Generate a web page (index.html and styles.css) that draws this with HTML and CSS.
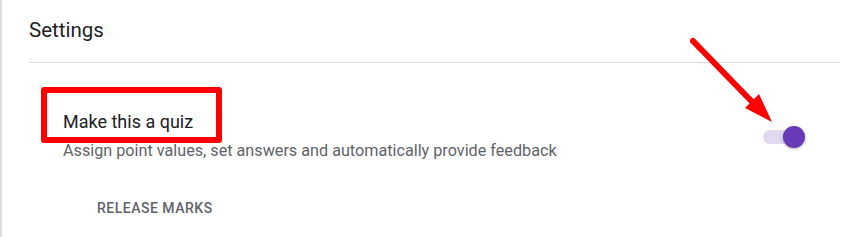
FILE: index.html
```html
<!DOCTYPE html>
<html>
<head>
<meta charset="utf-8">
<link rel="stylesheet" href="styles.css">
</head>
<body>
<div class="card">
  <div class="header">
    <div class="title">Settings</div>
  </div>
  <div class="row">
    <div class="texts">
      <div class="label">Make this a quiz</div>
      <div class="desc">Assign point values, set answers and automatically provide feedback</div>
    </div>
    <div class="toggle">
      <div class="track"></div>
      <div class="thumb"></div>
    </div>
  </div>
  <div class="actions">
    <span class="release">RELEASE MARKS</span>
  </div>
  <div class="highlight"></div>
  <svg class="arrow" width="851" height="237" viewBox="0 0 851 237">
    <line x1="693" y1="41" x2="760" y2="110" stroke="#ff0000" stroke-width="6" stroke-linecap="round"/>
    <polygon points="745,108 759,94 772,122" fill="#ff0000"/>
  </svg>
</div>
</body>
</html>
```
FILE: styles.css
```css
html, body {
  margin: 0;
  padding: 0;
  background: #ffffff;
}
body {
  width: 851px;
  height: 237px;
  overflow: hidden;
  font-family: Roboto, "Liberation Sans", Arial, sans-serif;
}
.card {
  position: relative;
  box-sizing: border-box;
  height: 237px;
  border-left: 2px solid #dddbea;
  padding: 0 12px 0 27px;
}
.header {
  height: 63px;
  border-bottom: 1px solid #dadce0;
  box-sizing: border-box;
}
.title {
  padding-top: 18px;
  font-size: 20.5px;
  line-height: 24px;
  color: #202124;
}
.row {
  display: flex;
  align-items: center;
  justify-content: space-between;
  padding: 47px 32px 0 34px;
}
.label {
  font-size: 18px;
  line-height: 24px;
  color: #202124;
}
.desc {
  margin-top: 7px;
  font-size: 16.2px;
  line-height: 20px;
  color: #5f6368;
}
.toggle {
  position: relative;
  width: 44px;
  height: 22px;
  margin-top: 2px;
}
.track {
  position: absolute;
  left: 0;
  top: 4px;
  width: 34px;
  height: 14px;
  border-radius: 7px;
  background: #e0d9ef;
}
.thumb {
  position: absolute;
  left: 20px;
  top: 0;
  width: 22px;
  height: 22px;
  border-radius: 50%;
  background: #673ab7;
  box-shadow: 0 1px 3px rgba(0,0,0,0.3);
}
.actions {
  padding: 37px 0 0 68px;
}
.release {
  font-size: 14px;
  font-weight: 500;
  letter-spacing: 0.5px;
  color: #5f6368;
}
.highlight {
  position: absolute;
  left: 39px;
  top: 87px;
  width: 181px;
  height: 56px;
  box-sizing: border-box;
  border: 6px solid #ff0000;
  border-radius: 3px;
}
.arrow {
  position: absolute;
  left: -2px;
  top: 0;
  pointer-events: none;
}
```
